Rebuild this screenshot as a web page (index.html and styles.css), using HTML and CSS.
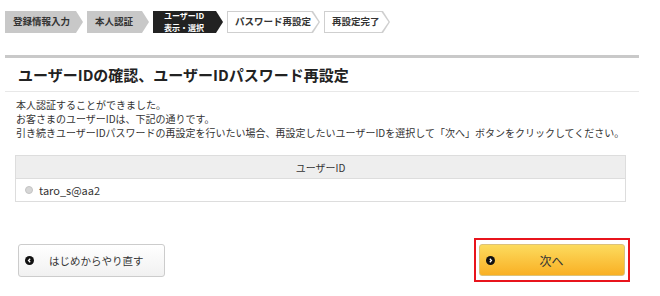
FILE: index.html
```html
<!DOCTYPE html>
<html lang="ja">
<head>
<meta charset="utf-8">
<link rel="stylesheet" href="styles.css">
</head>
<body>
<div class="page">
  <ol class="steps">
    <li class="step done s1">登録情報入力</li>
    <li class="step done s2">本人認証</li>
    <li class="step current s3"><span>ユーザーID<br>表示・選択</span></li>
    <li class="step todo s4">パスワード再設定</li>
    <li class="step todo s5">再設定完了</li>
  </ol>

  <div class="section">
    <h1 class="title">ユーザーIDの確認、ユーザーIDパスワード再設定</h1>
    <div class="lead">
      <p>本人認証することができました。</p>
      <p>お客さまのユーザーIDは、下記の通りです。</p>
      <p>引き続きユーザーIDパスワードの再設定を行いたい場合、再設定したいユーザーIDを選択して「次へ」ボタンをクリックしてください。</p>
    </div>

    <table class="idtable">
      <thead><tr><th>ユーザーID</th></tr></thead>
      <tbody><tr><td><label class="opt"><span class="radio"></span>taro_s@aa2</label></td></tr></tbody>
    </table>

    <div class="actions">
      <a class="btn btn-back"><span class="ico"><svg viewBox="0 0 10 10" width="9" height="9"><circle cx="5" cy="5" r="5" fill="#111"/><path d="M5.8 3 L3.9 5 L5.8 7" fill="none" stroke="#fff" stroke-width="1.4"/></svg></span>はじめからやり直す</a>
      <div class="highlight">
        <a class="btn btn-next"><span class="ico"><svg viewBox="0 0 10 10" width="9" height="9"><circle cx="5" cy="5" r="5" fill="#111"/><path d="M4.2 3 L6.1 5 L4.2 7" fill="none" stroke="#fff" stroke-width="1.4"/></svg></span><span class="lbl">次へ</span></a>
      </div>
    </div>
  </div>
</div>
</body>
</html>
```

FILE: styles.css
```css
* { box-sizing: border-box; }
html, body { margin: 0; padding: 0; background: #fff; }
body {
  font-family: "Noto Sans CJK JP", "Noto Sans", sans-serif;
  color: #333;
  width: 660px;
  height: 296px;
  overflow: hidden;
}
.page { padding-top: 11px; }

.steps {
  list-style: none;
  margin: 0 0 0 5px;
  padding: 0;
  display: flex;
  gap: 4px;
}
.step {
  position: relative;
  isolation: isolate;
  height: 22px;
  display: flex;
  align-items: center;
  padding: 0 15px 0 8px;
  font-size: 9.5px;
  font-weight: bold;
  line-height: 1;
  white-space: nowrap;
}
.step::before,
.step::after {
  content: "";
  position: absolute;
  z-index: -1;
  clip-path: polygon(0 0, calc(100% - 7px) 0, 100% 50%, calc(100% - 7px) 100%, 0 100%);
}
.step::before { inset: 0; background: var(--edge); }
.step::after { top: 1px; bottom: 1px; left: 1px; right: 1.5px; background: var(--fill); }
.done { --edge: #c8c8c8; --fill: #c8c8c8; color: #333; }
.current { --edge: #222; --fill: #222; color: #fff; }
.current span { line-height: 11.6px; font-size: 8px; padding-left: 2px; }
.todo { --edge: #cfcfcf; --fill: #fff; color: #333; }
.s1 { width: 78px; }
.s2 { width: 62px; }
.s3 { width: 70px; padding-left: 9px; }
.s4 { width: 93px; }
.s5 { width: 66px; }

.section {
  margin: 22px 21px 0 5px;
  border-top: 3px solid #c9c9c9;
}
.title {
  margin: 0;
  height: 34px;
  padding-left: 13px;
  display: flex;
  align-items: center;
  font-size: 15px;
  font-weight: bold;
  color: #222;
  border-bottom: 1px solid #e8e8e8;
}
.lead {
  padding: 6px 0 0 11px;
  font-size: 10px;
  line-height: 14px;
}
.lead p { margin: 0; }

.idtable {
  margin: 15px 0 0 10px;
  width: 611px;
  border-collapse: collapse;
  font-size: 10px;
}
.idtable th {
  height: 23px;
  background: #eeeeee;
  border: 1px solid #dddddd;
  font-weight: normal;
  text-align: center;
  padding: 0;
}
.idtable td {
  height: 23px;
  border: 1px solid #dddddd;
  padding: 0 0 0 9px;
}
.opt { display: flex; align-items: center; gap: 6px; font-size: 11px; }
.radio {
  width: 8px; height: 8px;
  border-radius: 50%;
  background: #d6d6d6;
  border: 1px solid #c4c4c4;
}

.actions {
  margin: 36px 0 0 13px;
  width: 612px;
  display: flex;
  justify-content: space-between;
  align-items: center;
}
.btn {
  display: flex;
  align-items: center;
  height: 33px;
  border-radius: 3px;
  font-size: 10.5px;
  color: #333;
  text-decoration: none;
}
.ico { display: flex; }
.btn-back {
  width: 147px;
  padding-left: 6px;
  gap: 15px;
  background: linear-gradient(#ffffff, #f1f1f1);
  border: 1px solid #cccccc;
}
.highlight {
  border: 2px solid #e8141c;
  padding: 4px 3px;
}
.btn-next {
  width: 146px;
  height: 32px;
  padding-left: 6px;
  background: linear-gradient(#fcdb5e, #f9b024);
  border: 1px solid #dcc27a;
  font-size: 12px;
}
.btn-next .lbl { flex: 1; text-align: center; padding-right: 16px; }
```
